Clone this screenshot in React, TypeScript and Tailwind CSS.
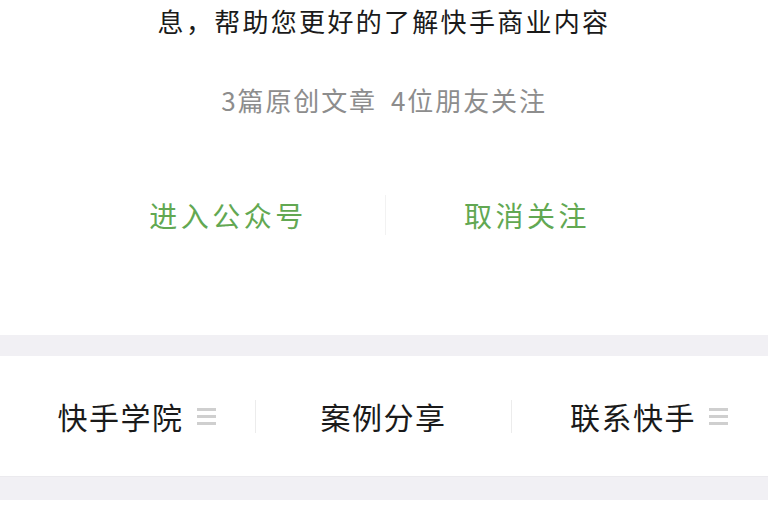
const font = { fontFamily: '"Noto Sans CJK SC", "Noto Sans", sans-serif' };

function MenuIcon() {
  return (
    <span className="ml-[13px] flex h-[19px] w-[19px] flex-col justify-between py-[1px]">
      <span className="h-[3px] w-full bg-[#cfcfcf]" />
      <span className="h-[3px] w-full bg-[#cfcfcf]" />
      <span className="h-[3px] w-full bg-[#cfcfcf]" />
    </span>
  );
}

function NavItem({ label, menu, last }: { label: string; menu?: boolean; last?: boolean }) {
  return (
    <div className="flex flex-1 items-center">
      <div className={`flex flex-1 items-center justify-center ${menu ? "pl-[18px]" : ""}`}>
        <span className="text-[30px] leading-[40px] tracking-[1.5px] text-[#1a1a1a]">{label}</span>
        {menu && <MenuIcon />}
      </div>
      {!last && <div className="h-[33px] w-px bg-[#ececec]" />}
    </div>
  );
}

export default function App() {
  return (
    <div className="h-[510px] w-full overflow-hidden bg-white" style={font}>
      <section className="flex h-[335px] flex-col items-center bg-white">
        <p className="mt-[3px] text-[26px] leading-[36px] tracking-[2.3px] text-[#1a1a1a]">
          息，帮助您更好的了解快手商业内容
        </p>
        <p className="mt-[43px] text-[26px] leading-[36px] tracking-[1.9px] text-[#8d8d8d]">
          3篇原创文章<span className="ml-[14px]">4位朋友关注</span>
        </p>
        <div className="mt-[77px] flex w-full items-center">
          <div className="flex w-[385px] justify-end">
            <button className="w-[314px] text-center text-[28px] leading-[40px] tracking-[3.5px] text-[#62a852]">
              进入公众号
            </button>
          </div>
          <div className="h-[40px] w-px bg-[#f2f2f2]" />
          <div className="flex flex-1">
            <button className="w-[282px] text-center text-[28px] leading-[40px] tracking-[3.5px] text-[#62a852]">
              取消关注
            </button>
          </div>
        </div>
      </section>

      <div className="h-[21px] bg-[#f1f0f4]" />

      <nav className="flex h-[120px] items-center bg-white">
        <NavItem label="快手学院" menu />
        <NavItem label="案例分享" />
        <NavItem label="联系快手" menu last />
      </nav>

      <div className="h-[24px] border-t border-[#ebeaee] bg-[#f1f0f4]" />
      <div className="h-[10px] bg-white" />
    </div>
  );
}
